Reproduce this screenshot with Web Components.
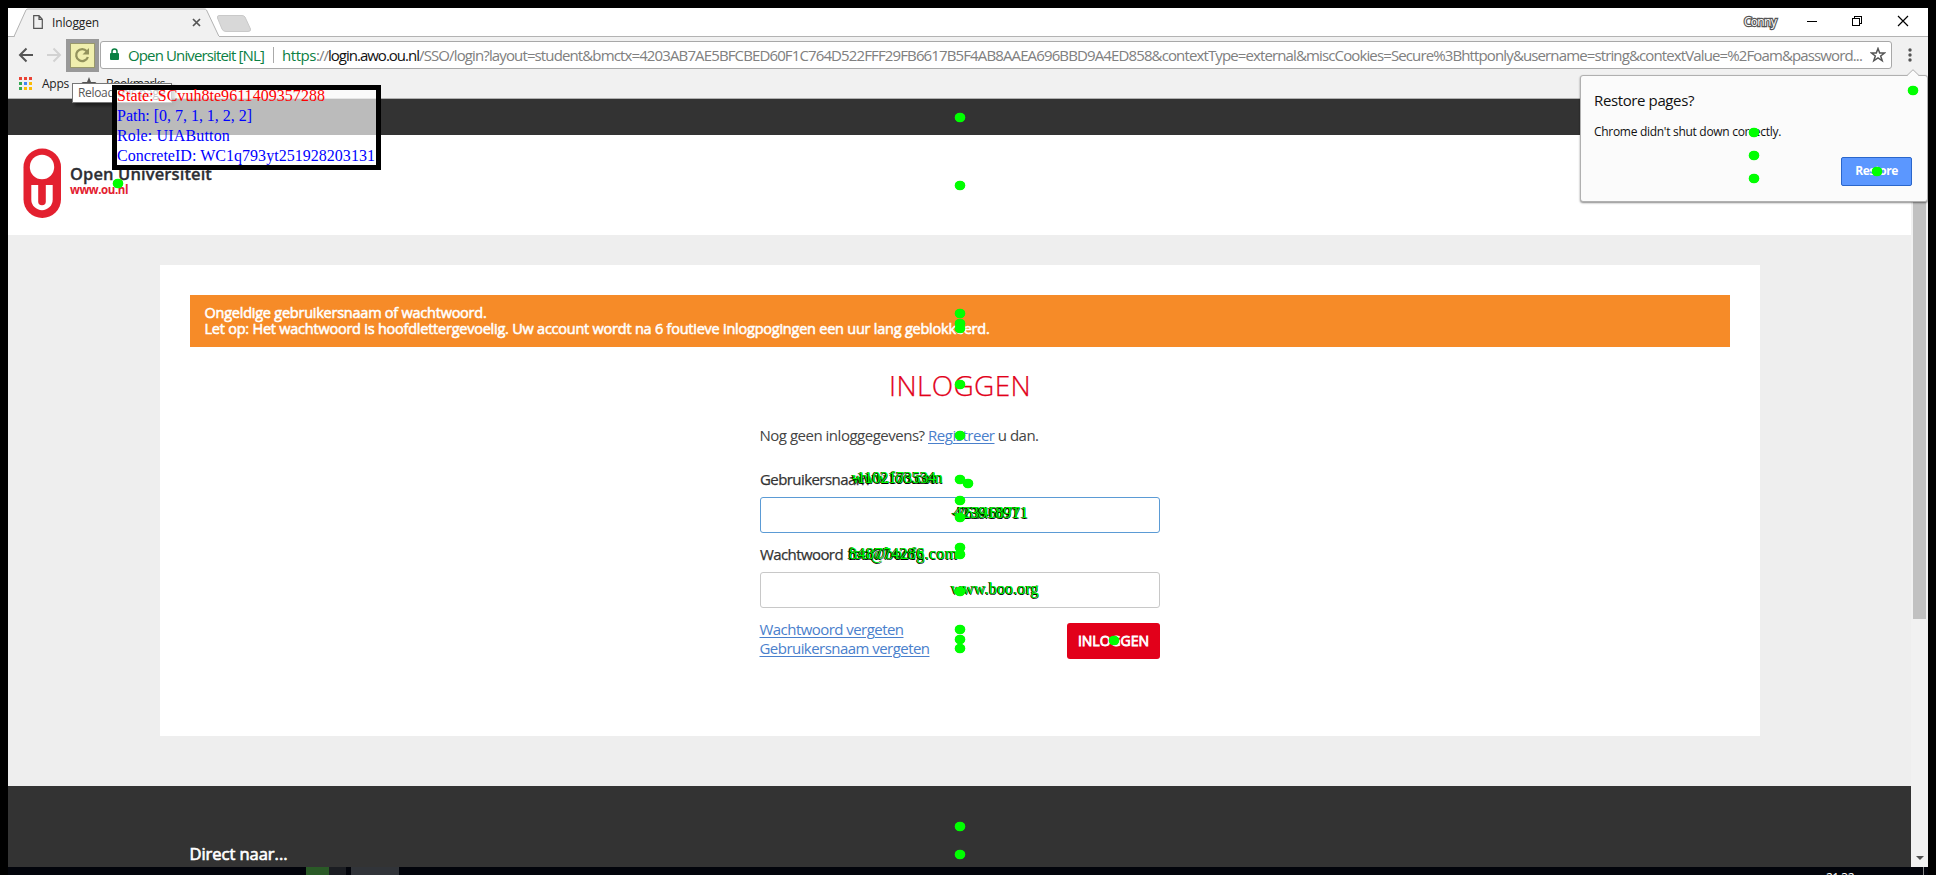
<!DOCTYPE html>
<html lang="nl">
<head>
<meta charset="utf-8">
<title>Inloggen</title>
<style>
html,body{margin:0;height:100%;overflow:hidden;background:#000}
body{font-family:"Open Sans","Noto Sans",sans-serif}
</style>
</head>
<body>
<desktop-screen></desktop-screen>
<script>
const define = (name, html, after) => customElements.define(name, class extends HTMLElement {
  connectedCallback() {
    if (this.shadowRoot) return;
    const t = document.createElement('template');
    t.innerHTML = html;
    this.attachShadow({mode: 'open'}).appendChild(t.content.cloneNode(true));
    if (after) after(this);
  }
});

/* One line of text spread over a fixed advance width (w) through letter-spacing. */
define('fit-text', `<style>:host{display:inline-block;white-space:pre;flex:none}span{display:inline-block;white-space:pre}:host([u]) span{text-decoration:underline;text-underline-offset:2px;text-decoration-thickness:1px}</style><span><slot></slot></span>`, el => {
  const w = +el.getAttribute('w');
  const span = el.shadowRoot.querySelector('span');
  const n = el.textContent.length;
  span.style.letterSpacing = ((w - span.getBoundingClientRect().width) / n) + 'px';
});

define('browser-tabs', `<style>
:host{display:flex;height:28px;background:#fff;border-bottom:1px solid #b3b3b3;position:relative}
.shape{position:absolute;left:0;top:0}
.tab{position:relative;display:flex;align-items:center;width:212px;padding-left:25px;box-sizing:border-box;font-size:12px;color:#222}
.tab fit-text{margin-left:9px;line-height:16px;margin-top:2px}
.tab .x{margin-left:93px}
.caption{margin-left:auto;display:flex;position:relative;align-items:center;font-size:12px}
.user{color:#fff;-webkit-text-stroke:2.4px #555;paint-order:stroke fill;line-height:16px;margin:0 30px 0 0;padding-top:0}
</style>
<svg class="shape" width="260" height="30"><path d="M0 28.500H6L18 2Q18.500 1 20 1H196Q198 1 198.500 2L211 28.500" fill="#f1f1f1" stroke="#b3b3b3"/><path d="M7 28.500H211" stroke="#f1f1f1"/>
<path d="M211 7.500H234Q236 7.500 237 9L242.500 21Q243 23.500 240 23.500H218Q215 23.500 214 21L209.500 10Q209 7.500 211 7.500Z" fill="#d8d8d8" stroke="#c9c9c9"/></svg>
<div class="tab"><svg width="10" height="14" fill="none" stroke="#555" stroke-width="1.200"><path d="M.7.700H6L9.300 4.300V13.300H.7ZM6 .7V4.300H9.300"/></svg><fit-text w="47">Inloggen</fit-text>
<svg class="x" width="9" height="9" stroke="#555" stroke-width="1.700"><path d="M1 1L8 8M8 1L1 8"/></svg></div>
<div class="caption"><fit-text class="user" w="32">Conny</fit-text>
<svg width="122" height="28" fill="none" stroke="#000" shape-rendering="crispEdges"><path d="M1 13.500H11M46.500 10.500H53.500V17.500H46.500ZM48.500 10V8.500H55.500V15.500H54"/><path d="M92 8L102 18M102 8L92 18" shape-rendering="auto" stroke-width="1.200"/></svg></div>`);

define('browser-toolbar', `<style>
:host{display:flex;height:32px;background:#f1f1f1;position:relative;padding-top:4px;box-sizing:border-box}
.nav{width:92px;flex:none;height:28px}
.box{display:flex;align-items:center;width:1790px;height:26px;background:#fff;border:1px solid #a8a8a8;border-radius:3px;font-size:15px;line-height:24px;flex:none}
.lock{margin:0 8px 2px 9px;flex:none}
.g{color:#0b8043}
.sep{width:1px;height:16px;background:#aaa;margin:0 8px 1px 9px;flex:none}
.u{color:#808080}.k{color:#111}
.star{margin-left:auto;margin-right:5px;flex:none}
.dots{margin:5px 0 0 14px}
</style>
<svg class="nav" fill="none" stroke="#555" stroke-width="2"><path d="M25 14H12M18.500 7.500L12 14L18.500 20.500"/><path stroke="#d2d2d2" d="M39 14H52M45.500 7.500L52 14L45.500 20.500"/></svg>
<div class="box"><svg class="lock" width="10" height="13"><path d="M2 6V3.500Q2 1 4.500 1T7 3.500V6" fill="none" stroke="#0b8043" stroke-width="1.500"/><rect y="5" width="9" height="7" rx="1" fill="#0b8043"/></svg>
<fit-text class="g" w="136">Open Universiteit [NL]</fit-text><i class="sep"></i><fit-text class="g" w="34">https</fit-text><fit-text class="u" w="12">://</fit-text><fit-text class="k" w="91">login.awo.ou.nl</fit-text><fit-text class="u" w="1443">/SSO/login?layout=student&amp;bmctx=4203AB7AE5BFCBED60F1C764D522FFF29FB6617B5F4AB8AAEA696BBD9A4ED858&amp;contextType=external&amp;miscCookies=Secure%3Bhttponly&amp;username=string&amp;contextValue=%2Foam&amp;password...</fit-text>
<svg class="star" width="16" height="16"><path d="M8 1.500L9.700 6H14.600L10.700 9L12.200 13.800L8 11L3.800 13.800L5.300 9L1.400 6H6.300Z" fill="none" stroke="#555" stroke-width="1.500"/></svg></div>
<svg class="dots" width="8" height="18" fill="#555"><circle cx="4" cy="4" r="1.700"/><circle cx="4" cy="9" r="1.700"/><circle cx="4" cy="14" r="1.700"/></svg>`);

define('bookmark-bar', `<style>
:host{display:flex;height:29px;background:#f1f1f1;border-bottom:1px solid #b0b0b0;font-size:12px;color:#222;align-items:center;padding:0 0 0 11px;box-sizing:content-box}
fit-text{margin-left:10px}
.star{margin-left:12px}
</style>
<svg width="13" height="13"><path fill="#ea4335" d="M0 0h3v3H0zM5 0h3v3H5zM10 0h3v3H10z"/><path fill="#34a853" d="M0 5h3v3H0zM0 10h3v3H0z"/><path fill="#4285f4" d="M5 5h3v3H5z"/><path fill="#fbbc05" d="M10 5h3v3H10zM5 10h3v3H5zM10 10h3v3H10z"/></svg>
<fit-text w="27">Apps</fit-text>
<svg class="star" width="16" height="16" fill="#555"><path d="M8 1L10 6H15.500L11 9.500L12.500 15L8 11.800L3.500 15L5 9.500L.5 6H6Z"/></svg>
<fit-text w="59" style="margin-left:9px">Bookmarks</fit-text>`);

define('site-header', `<style>
:host{display:block}
.dark{height:36px;background:#333}
.bar{height:100px;background:#fff;display:flex;padding:12px 0 0 15px;box-sizing:border-box}
.name{margin:16px 0 0 9px;display:flex;flex-direction:column}
.a{font-weight:600;font-size:16.500px;line-height:22px;color:#2d2e33;-webkit-text-stroke:.3px}
.b{font-weight:700;font-size:11.500px;line-height:12px;color:#e3202f;margin-top:-1px}
</style>
<div class="dark"></div>
<div class="bar"><svg width="38" height="72"><rect x=".5" y="1.500" width="37.500" height="69.500" rx="18.700" fill="#e3202f"/><circle cx="19" cy="20" r="12.200" fill="#fff"/><path d="M8.300 38H29.700V52.500A10.700 10.700 0 0 1 8.300 52.500Z" fill="#fff"/><path d="M15.200 36H22.800V54.500A3.800 3.800 0 0 1 15.200 54.500Z" fill="#e3202f"/></svg>
<div class="name"><fit-text class="a" w="142">Open Universiteit</fit-text><fit-text class="b" w="58">www.ou.nl</fit-text></div></div>`);

define('alert-box', `<style>
:host{display:flex;flex-direction:column;box-sizing:border-box;height:52px;background:#f68b28;color:#fff;padding:10px 0 0 14.500px;font-size:14.500px;line-height:16px;-webkit-text-stroke:.55px #fff}
</style><slot></slot>`);

define('login-field', `<style>
:host{display:block}
label{display:block;font-size:15px;line-height:20px;color:#333;-webkit-text-stroke:.25px}
.in{height:36px;box-sizing:border-box;border:1px solid var(--edge,#c8c8c8);border-radius:3px;background:#fff;margin-top:8px}
</style><label><slot></slot></label><div class="in"></div>`);

define('login-form', `<style>
:host{display:block;width:400px;margin:0 auto;font-size:15px;color:#444}
h1{margin:19px 0 0;height:38px;line-height:38px;font-size:28px;font-weight:300;color:#e2001a;text-align:center;-webkit-text-stroke:.25px}
p{margin:21px 0 0 -.5px;line-height:20px;display:flex}
a{color:#4a80cc}
login-field{margin-top:24px}
login-field + login-field{margin-top:11px}
.foot{display:flex;justify-content:space-between;margin-top:15px}
.links{display:flex;flex-direction:column;line-height:19px;margin:-3px 0 0 -.5px;align-items:flex-start}
.btn{width:93px;height:36px;background:#e2001a;border-radius:3px;color:#fff;font-size:14px;line-height:36px;text-align:center;-webkit-text-stroke:.8px #fff}
</style>
<h1><fit-text w="142">INLOGGEN</fit-text></h1>
<p><fit-text w="168.500">Nog geen inloggegevens? </fit-text><a><fit-text u w="66.500">Registreer</fit-text></a><fit-text w="44"> u dan.</fit-text></p>
<login-field style="--edge:#5b9bd5"><fit-text w="109">Gebruikersnaam</fit-text></login-field>
<login-field><fit-text w="83">Wachtwoord</fit-text></login-field>
<div class="foot"><div class="links"><a><fit-text u w="144">Wachtwoord vergeten</fit-text></a><a><fit-text u w="170">Gebruikersnaam vergeten</fit-text></a></div><div class="btn"><fit-text w="71">INLOGGEN</fit-text></div></div>`);

define('site-page', `<style>
:host{display:block;flex:1;background:#eee;overflow:hidden}
.card{width:1600px;height:471px;box-sizing:border-box;background:#fff;margin:30px 0 50px 152px;padding:30px}
footer{background:#333;height:81px;box-sizing:border-box;padding:57px 0 0 181.500px;color:#fff;font-size:16.500px;line-height:22px;-webkit-text-stroke:.65px #fff}
</style>
<site-header></site-header>
<div class="card"><alert-box><fit-text w="282">Ongeldige gebruikersnaam of wachtwoord.</fit-text><fit-text w="785">Let op: Het wachtwoord is hoofdlettergevoelig. Uw account wordt na 6 foutieve inlogpogingen een uur lang geblokkeerd.</fit-text></alert-box><login-form></login-form></div>
<footer><fit-text w="98">Direct naar...</fit-text></footer>`);

define('scroll-bar', `<style>
:host{display:flex;flex-direction:column;width:17px;background:#f1f1f1;align-items:center}
i{width:13px;height:503px;margin-top:17px;background:#c1c1c1}
svg{margin-top:auto;margin-bottom:6px}
</style><i></i><svg width="8" height="6"><path d="M0 1H8L4 5Z" fill="#505050"/></svg>`);

define('restore-bubble', `<style>
:host{position:absolute;left:1580px;top:75px;width:346px;height:125px;background:#fbfbfb;border:1px solid #b0b0b0;border-radius:3px;box-shadow:0 1px 2px #0007;color:#111}
.tip{position:absolute;left:325px;top:-7px}
.body{display:flex;flex-direction:column;padding:14px 15px 0 13px}
.t{font-size:15px;line-height:21px}.m{font-size:12px;line-height:16px;margin-top:13px}
.b{align-self:flex-end;width:69px;height:27px;margin-top:17px;border:1px solid #2a66cb;border-radius:2px;background:#5b97ff;color:#fff;font-weight:700;font-size:12px;line-height:26px;text-align:center}
</style>
<svg class="tip" width="14" height="8"><path d="M1 7L7 1L13 7V8H1Z" fill="#fbfbfb"/><path d="M1 6.500L7 .7L13 6.500" fill="none" stroke="#b0b0b0"/></svg>
<div class="body"><fit-text class="t" w="100">Restore pages?</fit-text><fit-text class="m" w="187">Chrome didn't shut down correctly.</fit-text><div class="b"><fit-text w="42.500">Restore</fit-text></div></div>`);

define('state-panel', `<style>
:host{position:absolute;left:112px;top:85px;width:259px;height:75px;border:5px solid #000;background:rgba(255,255,255,.667);display:flex;flex-direction:column;font:16px/20px "Liberation Serif",serif;color:#00f}
fit-text:first-of-type{color:#f00;margin-top:-4px}
</style><fit-text w="208">State: SCvuh8te9611409357288</fit-text><fit-text w="135">Path: [0, 7, 1, 1, 2, 2]</fit-text><fit-text w="113">Role: UIAButton</fit-text><fit-text w="258">ConcreteID: WC1q793yt251928203131</fit-text>`);

define('reload-tip', `<style>
:host{position:absolute;left:72px;top:83px;width:93px;height:18px;padding-left:5px;border:1px solid #767676;background:#fff;color:#575757;font-size:12px;line-height:18px;box-shadow:3px 3px 3px #0006}
</style><fit-text w="87">Reload this page</fit-text>`);

define('reload-mark', `<style>
:host{position:absolute;left:66px;top:39px;width:33px;height:33px;box-sizing:border-box;border:4px solid #999;background:#f0efae;box-shadow:inset 0 0 0 1px #99996b}
svg{display:block}
</style><svg width="25" height="25" fill="none" stroke="#93935c" stroke-width="2.300"><path d="M16.800 8.200A6 6 0 1 0 17.900 14"/><path d="M19 5V11.500H12.500Z" fill="#93935c" stroke="none"/></svg>`);

/* Action markers: a round dot, or a typed string with a black offset edge. */
define('action-dots', `<style>
:host{position:absolute;inset:0}
i{position:absolute;width:10px;height:9px;border-radius:50%;background:#0f0;box-shadow:0 0 0 .3px #0f0}
</style>`, el => {
  const pts = [[960,118],[960,186],[118,184],[1913,91],[1754,133],[1754,156],[1754,179],[1877,172],[960,314],[960,324],[960,329],[960,385],[960,436],[960,480],[968,484],[960,501],[960,518],[960,548],[960,555],[960,592],[960,630],[960,640],[960,649],[1114,641],[960,827],[960,855]];
  for (const [x, y] of pts) {
    const d = document.createElement('i');
    d.style.cssText = `left:${x - 5}px;top:${y - 5}px`;
    el.shadowRoot.append(d);
  }
});
define('action-text', `<style>
:host{position:absolute;font:16px/18px "Liberation Serif",serif;color:#0f0;text-shadow:-1px 0 #000,0 1px #000;white-space:pre}
</style><slot></slot>`);

define('task-bar', `<style>
:host{display:flex;height:8px;margin:0 8px;background:#02040b;overflow:hidden;color:#fff;font-size:12px;line-height:16px}
i{height:8px}
.c{margin:3px 0 0 1427px;height:4px}
.e{margin-left:69px;width:1px;background:#888}
</style><i style="margin-left:298px;width:23px;background:#2a5a27"></i><i style="width:17px;background:#1b1d22"></i><i style="margin-left:5px;width:48px;background:#313439"></i><fit-text class="c" w="28">21:32</fit-text><i class="e"></i>`);

define('desktop-screen', `<style>
:host{display:flex;flex-direction:column;width:1936px;height:875px;background:#000;position:relative;overflow:hidden;box-sizing:border-box;padding-top:8px}
.win{width:1920px;margin:0 8px;height:859px;display:flex;flex-direction:column}
.view{display:flex;flex:1;min-height:0}
</style>
<div class="win"><browser-tabs></browser-tabs><browser-toolbar></browser-toolbar><bookmark-bar></bookmark-bar>
<div class="view"><site-page></site-page><scroll-bar></scroll-bar></div></div>
<task-bar></task-bar>
<restore-bubble></restore-bubble><reload-tip></reload-tip><state-panel></state-panel><reload-mark></reload-mark>
<action-text style="left:852px;top:469px"><fit-text w="91">www.foo.com</fit-text></action-text>
<action-text style="left:852px;top:469px"><fit-text w="84">-1102173534</fit-text></action-text>
<action-text style="left:952px;top:504px"><fit-text w="76">-763460771</fit-text></action-text>
<action-text style="left:954px;top:504px"><fit-text w="66">42391891</fit-text></action-text>
<action-text style="left:848px;top:545px"><fit-text w="110">foo@boofg.com</fit-text></action-text>
<action-text style="left:849px;top:545px"><fit-text w="76">848774286</fit-text></action-text>
<action-text style="left:951px;top:580px"><fit-text w="88">www.boo.org</fit-text></action-text>
<action-dots></action-dots>`);
</script>
</body>
</html>
